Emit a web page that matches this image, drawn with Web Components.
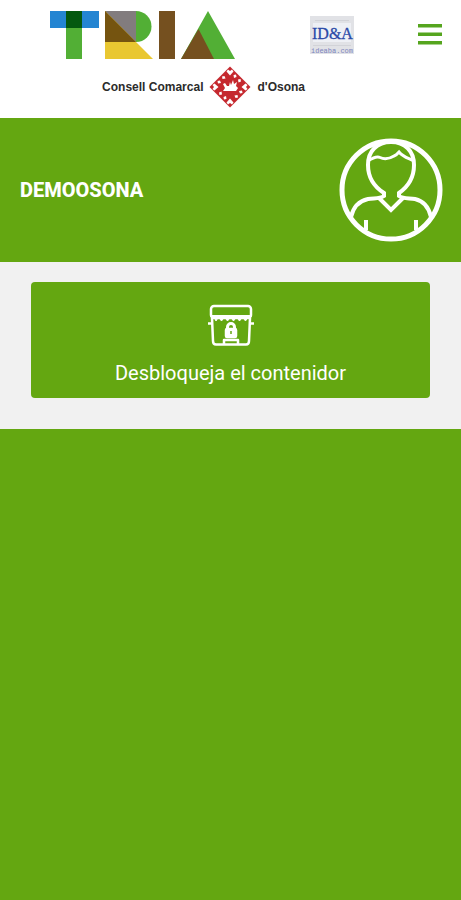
<!DOCTYPE html>
<html lang="ca">
<head>
<meta charset="utf-8">
<meta name="viewport" content="width=device-width, initial-scale=1">
<title>TRIA</title>
<style>
  :root{--green:#64a711;--paper:#f1f1f1}
  body{margin:0;background:var(--green);font-family:Roboto,"Open Sans",sans-serif}
</style>
</head>
<body>
<tria-app>
  <tria-header slot="header">
    <tria-logo></tria-logo>
    <partner-logo slot="partner"></partner-logo>
    <menu-button slot="menu"></menu-button>
  </tria-header>
  <user-bar slot="user">DEMOOSONA</user-bar>
  <action-card>Desbloqueja el contenidor</action-card>
</tria-app>
<script>
// Small base: every element just stamps its markup into an open root
class TriaElement extends HTMLElement{
  constructor(){
    super();
    this.attachShadow({mode:'open'}).innerHTML = this.render();
  }
}

customElements.define('tria-app', class extends TriaElement{
  render(){ return `
    <style>
      :host{display:flex;flex-direction:column;min-height:100vh;background:var(--green)}
      main{background:var(--paper);padding:20px 31px 31px}
    </style>
    <slot name="header"></slot>
    <slot name="user"></slot>
    <main><slot></slot></main>`; }
});

customElements.define('tria-header', class extends TriaElement{
  render(){ return `
    <style>
      :host{display:block;background:#fff}
      header{display:flex;align-items:flex-start;padding:10px 19px 10px 49px}
      .menu{display:flex;flex:1;justify-content:flex-end;padding-top:13px}
      .partner{display:flex;padding:6px 0 0 5px}
    </style>
    <header>
      <slot></slot>
      <div class="partner"><slot name="partner"></slot></div>
      <div class="menu"><slot name="menu"></slot></div>
    </header>`; }
});

customElements.define('tria-logo', class extends TriaElement{
  render(){ return `
    <style>
      :host{display:block;width:256px}
      svg{display:block}
      .council{display:flex;align-items:center;justify-content:flex-end;gap:6px;padding-top:6px;
        font:bold 12px/16px "Liberation Sans",Arial,sans-serif;color:#2b2b2b;white-space:nowrap}
    </style>
    <svg width="187" height="50" viewBox="49 10 187 50" role="img" aria-label="TRIA">
      <rect x="50" y="11" width="49" height="17" fill="#2485d2"/>
      <rect x="66" y="28" width="16" height="31" fill="#52af35"/>
      <rect x="66" y="11" width="16" height="17" fill="#04580f"/>
      <circle cx="136" cy="26.500" r="15.500" fill="#52af35"/>
      <rect x="105" y="11" width="31" height="31" fill="#827c7e"/>
      <polygon points="105,11 105,59 153,59" fill="#e9c731"/>
      <polygon points="105,11 105,42 136,42" fill="#755410"/>
      <rect x="159" y="11" width="16" height="48" fill="#75501f"/>
      <polygon points="208,11 181,59 235,59" fill="#52af35"/>
      <polygon points="198.500,29 181,59 214,59" fill="#75501f"/>
    </svg>
    <div class="council">
      <span>Consell Comarcal</span>
      <svg width="42" height="42" viewBox="0 0 42 42" aria-hidden="true">
        <path d="M21 0.500 41.500 21 21 41.500 0.500 21Z" fill="#c5282e"/>
        <g fill="#fff">
          <path id="h" d="M21 9.500 17.500 5.500 19 3.500 21 5 23 3.500 24.500 5.500Z"/>
          <use href="#h" transform="rotate(90 21 21)"/>
          <use href="#h" transform="rotate(180 21 21)"/>
          <use href="#h" transform="rotate(270 21 21)"/>
          <g id="s">
            <path d="M13 10.500 15.500 10 16.500 12.500 13.500 13Z"/>
            <path d="M8.500 15 11 14.500 12 17 9 17.500Z"/>
          </g>
          <use href="#s" transform="rotate(90 21 21)"/>
          <use href="#s" transform="rotate(180 21 21)"/>
          <use href="#s" transform="rotate(270 21 21)"/>
          <path d="M14 18 16 17 18 20 20 20 21 16 22 19 24 14 25 18 28 16 27 20 29 22 27 25 14 25 16 22Z"/>
        </g>
      </svg>
      <span>d'Osona</span>
    </div>`; }
});

customElements.define('partner-logo', class extends TriaElement{
  render(){ return `
    <style>
      :host{display:block;width:44px}
      svg{display:block}
    </style>
    <svg width="44" height="39" viewBox="0 0 44 39" role="img" aria-label="ID&amp;A ideaba.com">
      <rect width="44" height="38" fill="#e1e2e6"/>
      <rect x="3" y="7" width="38" height="19" fill="#eef0f5"/>
      <path d="M5 4.500h34M3 29.500h38" stroke="#d2d3d8"/>
      <text x="2" y="23" font-family="Liberation Serif, serif" font-size="16" fill="#2c4ba8" stroke="#2c4ba8" stroke-width=".3">ID&amp;A</text>
      <text x="1" y="37" font-family="Liberation Mono, monospace" font-size="7" fill="#7d85bd">ideaba.com</text>
    </svg>`; }
});

customElements.define('menu-button', class extends TriaElement{
  render(){ return `
    <style>
      :host{display:block}
      button{display:block;padding:0;border:0;background:none;cursor:pointer}
      svg{display:block}
    </style>
    <button type="button" aria-label="Menú">
      <svg width="24" height="24" viewBox="0 0 24 24" fill="#55a51e">
        <rect y="1" width="24" height="3.500"/>
        <rect y="9.500" width="24" height="3.500"/>
        <rect y="18" width="24" height="3.500"/>
      </svg>
    </button>`; }
});

customElements.define('user-bar', class extends TriaElement{
  render(){ return `
    <style>
      :host{display:flex;align-items:center;justify-content:space-between;
        padding:20px 18px 20px 20px;background:var(--green);color:#fff}
      h1{margin:0;font-size:20px;line-height:24px;font-weight:800}
      svg{display:block}
    </style>
    <h1><slot></slot></h1>
    <svg width="104" height="104" viewBox="0 0 104 104" fill="none" stroke="#fff" stroke-width="4" aria-hidden="true">
      <circle cx="52" cy="52" r="49" stroke-width="5"/>
      <path d="M45 57V55C34 48 29 39 29 27C29 13 38 4 52 4S75 13 75 27C75 39 70 48 60 55V57"/>
      <path d="M29 23C35 19 38 18 41 19.500C46 22 50 21 55 18C58 17 59 15 60 14C64 19 69 20 75 23" stroke-width="3"/>
      <path d="M45 54V58C41 61 35 60 29 61C20 63 14 70 12 79"/>
      <path d="M60 54V58C64 61 70 60 76 61C85 63 90 70 92 79"/>
      <path d="M40 60 52 72 64 60"/>
      <path d="M27 82V92M77 82V92"/>
    </svg>`; }
});

customElements.define('action-card', class extends TriaElement{
  render(){ return `
    <style>
      :host{display:block}
      button{display:flex;flex-direction:column;align-items:center;gap:12px;width:100%;
        padding:21px 16px 13px;border:0;border-radius:4px;background:var(--green);color:#fff;
        font:20px/24px Roboto,"Open Sans",sans-serif;cursor:pointer}
      svg{display:block}
    </style>
    <button type="button">
      <svg width="46" height="46" viewBox="0 0 46 46" fill="none" stroke="#fff" stroke-width="2.500" stroke-linejoin="round" aria-hidden="true">
        <rect x="3" y="3" width="40" height="12" rx="3"/>
        <path d="M4 13.500H42" stroke-width="3"/>
        <path d="M6 14H40L37.500 18 34.500 14 31.500 18 28.500 14 25.500 18 22.500 14 19.500 18 16.500 14 13.500 18 10.500 14 8 18Z" fill="#fff" stroke-width="1"/>
        <path d="M4 15 5 38Q5 41.500 8 41.500H38Q41 41.500 41 38L42 15"/>
        <path d="M0 20.500H5M41 20.500H46"/>
        <path d="M19.500 26V24a3.500 3.500 0 0 1 7 0V26" stroke-width="3"/>
        <rect x="18" y="26" width="10" height="8" rx="1" fill="#fff"/>
        <path d="M23 28V31" stroke="#64a711" stroke-width="1.500"/>
        <path d="M16 41V37H30V41"/>
      </svg>
      <slot></slot>
    </button>`; }
});
</script>
</body>
</html>
